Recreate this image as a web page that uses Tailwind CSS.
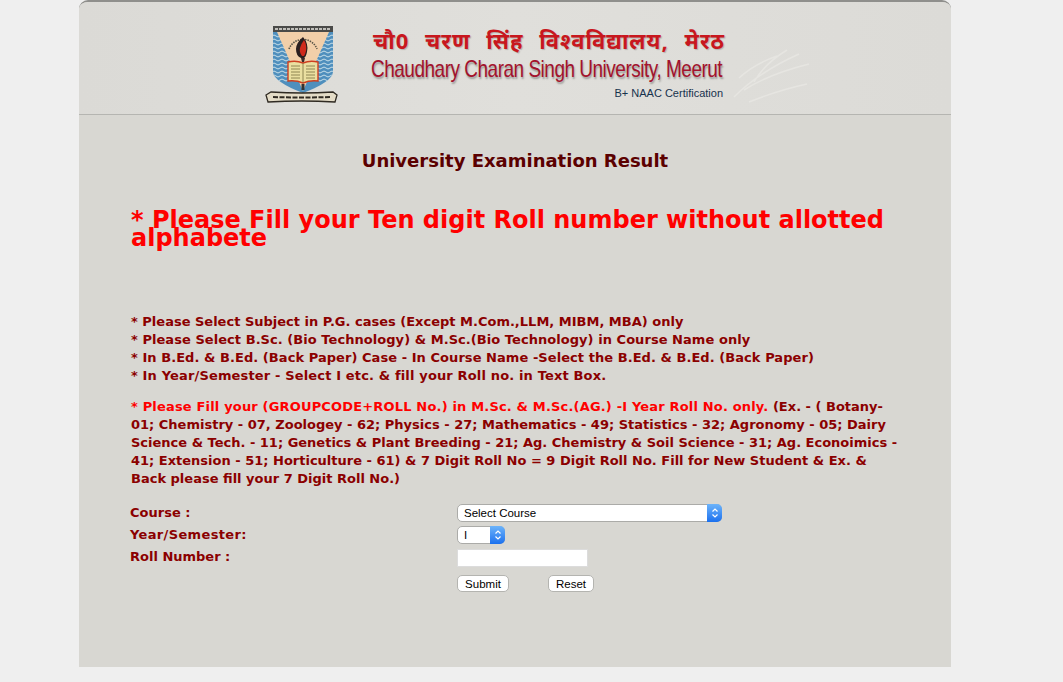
<!DOCTYPE html>
<html>
<head>
<meta charset="utf-8">
<script src="https://cdn.jsdelivr.net/npm/@tailwindcss/browser@4"></script>
</head>
<body class="bg-[#efefef] h-[682px] overflow-hidden font-['DejaVu_Sans',sans-serif]">
<div class="ml-[79px] w-[872px] h-[667px] bg-[#d8d7d2] rounded-t-[9px] border-t-2 border-[#8f8f8c] overflow-hidden">
  <header class="h-[113px] border-b border-[#b5b5b1] bg-gradient-to-r from-[#dbdad6] via-[#e0dfdb] to-[#dcdbd7] relative">
    <svg class="absolute left-[650px] top-[30px]" width="90" height="75" viewBox="0 0 90 75" fill="none" stroke="#e6e5e1" stroke-width="1.500">
      <path d="M5 65 Q30 40 70 22M15 58 Q40 42 80 32M25 50 Q35 32 58 18M10 46 Q25 32 48 24M20 70 Q50 58 78 52"/>
    </svg>
    <div class="flex relative">
      <svg class="ml-[185px] mt-[23px] shrink-0" width="78" height="84" viewBox="0 0 78 84">
        <defs><clipPath id="shield"><path d="M9 7 H69 V47 Q68 57 39 68 Q10 57 9 47Z"/></clipPath></defs>
        <rect x="9" y="1" width="60" height="6" fill="#4a4a48"/>
        <path d="M11 4 H67" stroke="#e8e6df" stroke-width="1.600" stroke-dasharray="3 1"/>
        <path d="M9 7 H69 V47 Q68 57 39 68 Q10 57 9 47Z" fill="#4f8fbd"/>
        <g clip-path="url(#shield)" fill="none" stroke="#c9dfe9" stroke-width="1">
          <path d="M8 11 q2-2 4 0 t4 0 t4 0 t4 0 t4 0M50 11 q2-2 4 0 t4 0 t4 0 t4 0 t4 0"/>
          <path d="M8 15 q2-2 4 0 t4 0 t4 0 t4 0 t4 0M50 15 q2-2 4 0 t4 0 t4 0 t4 0 t4 0"/>
          <path d="M8 19 q2-2 4 0 t4 0 t4 0 t4 0 t4 0M50 19 q2-2 4 0 t4 0 t4 0 t4 0 t4 0"/>
          <path d="M8 23 q2-2 4 0 t4 0 t4 0 t4 0 t4 0M50 23 q2-2 4 0 t4 0 t4 0 t4 0 t4 0"/>
          <path d="M8 27 q2-2 4 0 t4 0 t4 0 t4 0 t4 0M50 27 q2-2 4 0 t4 0 t4 0 t4 0 t4 0"/>
          <path d="M8 31 q2-2 4 0 t4 0 t4 0 t4 0 t4 0M50 31 q2-2 4 0 t4 0 t4 0 t4 0 t4 0"/>
          <path d="M8 35 q2-2 4 0 t4 0 t4 0 t4 0 t4 0M50 35 q2-2 4 0 t4 0 t4 0 t4 0 t4 0"/>
          <path d="M8 39 q2-2 4 0 t4 0 t4 0 t4 0 t4 0M50 39 q2-2 4 0 t4 0 t4 0 t4 0 t4 0"/>
          <path d="M8 43 q2-2 4 0 t4 0 t4 0 t4 0 t4 0M50 43 q2-2 4 0 t4 0 t4 0 t4 0 t4 0"/>
          <path d="M8 47 q2-2 4 0 t4 0 t4 0 t4 0 t4 0M50 47 q2-2 4 0 t4 0 t4 0 t4 0 t4 0"/>
          <path d="M8 51 q2-2 4 0 t4 0 t4 0 t4 0 t4 0M50 51 q2-2 4 0 t4 0 t4 0 t4 0 t4 0"/>
          <path d="M8 55 q2-2 4 0 t4 0 t4 0 t4 0 t4 0M50 55 q2-2 4 0 t4 0 t4 0 t4 0 t4 0"/>
        </g>
        <path d="M13 7 H65 L39 66Z" fill="#f2cfa9"/>
        <path d="M25 24 A15 15 0 0 1 53 24" fill="none" stroke="#5b5648" stroke-width="1.600" stroke-dasharray="1.500 1"/>
        <path d="M39 12 q6 7 4 15 q-1 5 -3 6 h-3 q-5-2-5-9 q0-6 7-12Z" fill="#2b1f1f"/>
        <path d="M40 15 q3 5 2 11 q-1 4-2 5 h-2 q-3-4-2-8 q1-4 4-8Z" fill="#cf2a1c"/>
        <path d="M37 33 h4 l-1 4 h-2Z" fill="#3a2a2a"/>
        <path d="M24 37 Q32 35 39 38 Q46 35 54 37 V56 Q46 55 39 58 Q32 55 24 56Z" fill="#eadfa0" stroke="#cd3f20" stroke-width="1.400"/>
        <path d="M39 38 V58M27 41h9M27 44h9M27 47h9M27 50h9M27 53h9M42 41h9M42 44h9M42 47h9M42 50h9M42 53h9" stroke="#7a6f3f" stroke-width=".8"/>
        <rect x="37.500" y="59" width="3" height="6" fill="#333"/>
        <path d="M2 70 L7 67 Q38 69 69 67 L73 70 L71 77 Q38 75 4 77Z" fill="#e4dcc7" stroke="#2f2a22" stroke-width="1.300"/>
        <path d="M9 72 Q38 73 67 72" fill="none" stroke="#2f2a22" stroke-width="2" stroke-dasharray="5 1.500"/>
      </svg>
      <div class="ml-[29px] w-[352px] shrink-0">
        <div class="mt-[23px] ml-[2px] h-[30px] leading-[30px] text-[22px] font-bold text-[#c8171e] whitespace-nowrap tracking-[1px] [word-spacing:9px] [text-shadow:1px_1px_1px_#b3b2ae] font-['Noto_Sans','DejaVu_Sans',sans-serif]">चौ0 चरण सिंह विश्वविद्यालय, मेरठ</div>
        <div class="h-[28px] leading-[28px] text-[24px] text-[#a3132d] whitespace-nowrap font-['Liberation_Sans',sans-serif] tracking-[-0.6px] [text-shadow:1px_2px_2px_#9a9a96] origin-left scale-x-[.79]">Chaudhary Charan Singh University, Meerut</div>
        <div class="mt-[3px] text-right text-[11px] leading-[14px] text-[#17324d] font-['Liberation_Sans',sans-serif]">B+ NAAC Certification</div>
      </div>
    </div>
  </header>

  <main class="pl-[52px] pr-[52px]">
    <h1 class="mt-[35px] -ml-[52px] -mr-[52px] text-center text-[18px] leading-[22px] font-bold text-[#5b0000]">University Examination Result</h1>
    <p class="mt-[39px] text-[24px] leading-[18px] font-bold text-[#ff0000]">* Please Fill your Ten digit Roll number without allotted alphabete</p>
    <div class="mt-[66px] text-[13px] leading-[18px] font-bold text-[#8b0000]">
      <p>* Please Select Subject in P.G. cases (Except M.Com.,LLM, MIBM, MBA) only</p>
      <p class="tracking-[.05px]">* Please Select B.Sc. (Bio Technology) &amp; M.Sc.(Bio Technology) in Course Name only</p>
      <p class="tracking-[.055px]">* In B.Ed. &amp; B.Ed. (Back Paper) Case - In Course Name -Select the B.Ed. &amp; B.Ed. (Back Paper)</p>
      <p class="tracking-[.15px]">* In Year/Semester - Select I etc. &amp; fill your Roll no. in Text Box.</p>
    </div>
    <p class="mt-[13px] text-[13px] leading-[18px] font-bold text-[#8b0000]"><span class="text-[#ff0000] tracking-[.17px]">* Please Fill your (GROUPCODE+ROLL No.) in M.Sc. &amp; M.Sc.(AG.) -I Year Roll No. only.</span> (Ex. - ( Botany-01; Chemistry - 07, Zoologey - 62; Physics - 27; Mathematics - 49; Statistics - 32; Agronomy - 05; Dairy Science &amp; Tech. - 11; Genetics &amp; Plant Breeding - 21; Ag. Chemistry &amp; Soil Science - 31; Ag. Econoimics - 41; Extension - 51; Horticulture - 61) &amp; 7 Digit Roll No = 9 Digit Roll No. Fill for New Student &amp; Ex. &amp; Back please fill your 7 Digit Roll No.)</p>

    <form class="mt-[16px] -ml-[1px] grid grid-cols-[327px_1fr] text-[13px] font-bold text-[#8b0000]">
      <label class="h-[22px] leading-[18px]">Course :</label>
      <div class="h-[22px]">
        <div class="relative w-[265px] h-[18px]">
          <select class="appearance-none block w-full h-full bg-white rounded-[5px] border border-[#ababa8] pl-[6px] text-[11.500px] font-normal text-black font-['Liberation_Sans',sans-serif]"><option>Select Course</option></select>
          <span class="absolute right-0 top-0 w-[15px] h-[18px] rounded-r-[5px] bg-gradient-to-b from-[#6cb3fa] to-[#1a70ee] flex items-center justify-center pointer-events-none">
            <svg width="8" height="12" viewBox="0 0 8 12" fill="none" stroke="#fff" stroke-width="1.200"><path d="M1.500 4.500 L4 2 L6.500 4.500M1.500 7.500 L4 10 L6.500 7.500"/></svg>
          </span>
        </div>
      </div>
      <label class="h-[22px] leading-[18px] tracking-[.35px]">Year/Semester:</label>
      <div class="h-[22px]">
        <div class="relative w-[48px] h-[18px]">
          <select class="appearance-none block w-full h-full bg-white rounded-[5px] border border-[#ababa8] pl-[6px] text-[11.500px] font-normal text-black font-['Liberation_Sans',sans-serif]"><option>I</option></select>
          <span class="absolute right-0 top-0 w-[15px] h-[18px] rounded-r-[5px] bg-gradient-to-b from-[#6cb3fa] to-[#1a70ee] flex items-center justify-center pointer-events-none">
            <svg width="8" height="12" viewBox="0 0 8 12" fill="none" stroke="#fff" stroke-width="1.200"><path d="M1.500 4.500 L4 2 L6.500 4.500M1.500 7.500 L4 10 L6.500 7.500"/></svg>
          </span>
        </div>
      </div>
      <label class="h-[26px] leading-[18px]">Roll Number :</label>
      <div class="h-[26px] pt-[1px]">
        <input type="text" class="block w-[131px] h-[18px] bg-white border border-[#dcdcdc] outline-none">
      </div>
      <div></div>
      <div class="flex gap-[39px] pt-[1px] font-normal text-[11.500px] text-black font-['Liberation_Sans',sans-serif]">
        <button type="button" class="w-[52px] h-[17px] bg-white rounded-[5px] border border-[#b4b4b0]">Submit</button>
        <button type="button" class="w-[46px] h-[17px] bg-white rounded-[5px] border border-[#b4b4b0]">Reset</button>
      </div>
    </form>
  </main>
</div>
</body>
</html>
